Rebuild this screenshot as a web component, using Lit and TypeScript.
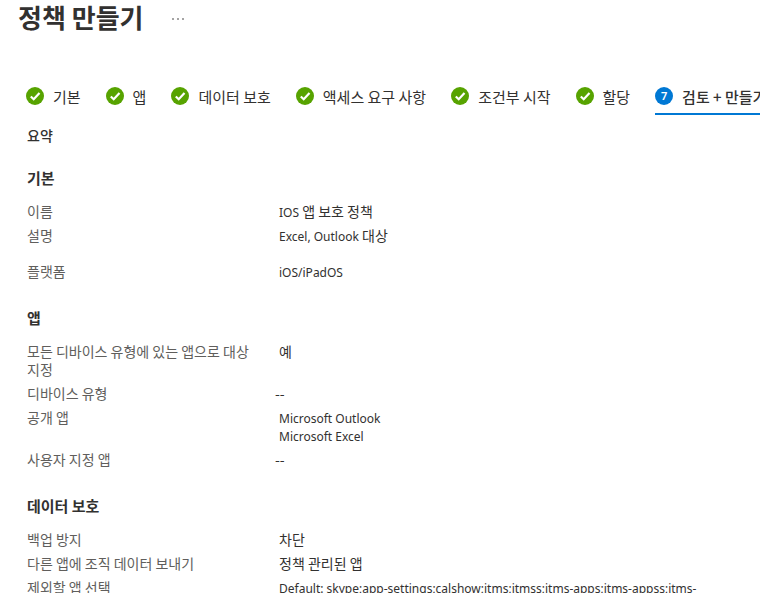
import { LitElement, html, svg, css } from "lit";
import { customElement, property } from "lit/decorators.js";
import { classMap } from "lit/directives/class-map.js";

interface Row {
  label: string;
  values: string[];
  tall?: boolean;
}

interface Section {
  title: string;
  rows: Row[];
}

const STEPS = ["기본", "앱", "데이터 보호", "액세스 요구 사항", "조건부 시작", "할당", "검토 + 만들기"];

const SECTIONS: Section[] = [
  {
    title: "기본",
    rows: [
      { label: "이름", values: ["IOS 앱 보호 정책"] },
      { label: "설명", values: ["Excel, Outlook 대상"], tall: true },
      { label: "플랫폼", values: ["iOS/iPadOS"] },
    ],
  },
  {
    title: "앱",
    rows: [
      { label: "모든 디바이스 유형에 있는 앱으로 대상 지정", values: ["예"] },
      { label: "디바이스 유형", values: [] },
      { label: "공개 앱", values: ["Microsoft Outlook", "Microsoft Excel"] },
      { label: "사용자 지정 앱", values: [] },
    ],
  },
  {
    title: "데이터 보호",
    rows: [
      { label: "백업 방지", values: ["차단"] },
      { label: "다른 앱에 조직 데이터 보내기", values: ["정책 관리된 앱"] },
      {
        label: "제외할 앱 선택",
        values: ["Default: skype;app-settings;calshow;itms;itmss;itms-apps;itms-appss;itms-"],
      },
    ],
  },
];

@customElement("wizard-steps")
export class WizardSteps extends LitElement {
  @property({ type: Array }) steps: string[] = [];
  @property({ type: Number }) current = 0;

  static styles = css`
    :host {
      display: block;
      overflow: hidden;
    }
    .steps {
      display: flex;
      gap: 25px;
      padding-left: 26px;
    }
    .step {
      display: flex;
      flex: none;
      align-items: center;
      gap: 9px;
      height: 36px;
      padding: 0;
      border: 0;
      border-bottom: 2px solid transparent;
      background: none;
      color: #323130;
      font: inherit;
      font-size: 15px;
      line-height: 20px;
      white-space: nowrap;
      cursor: pointer;
    }
    .step.current {
      border-bottom-color: #0078d4;
      font-weight: 500;
    }
    .name {
      padding-top: 2px;
    }
    .mark {
      display: block;
      width: 18px;
      height: 18px;
    }
    .number {
      display: grid;
      place-items: center;
      width: 18px;
      height: 18px;
      border-radius: 50%;
      background: #0078d4;
      color: #fff;
      font-family: "Noto Sans", sans-serif;
      font-size: 11px;
      font-weight: 600;
      line-height: 18px;
    }
  `;

  private mark(index: number) {
    if (index === this.current) return html`<span class="number">${index + 1}</span>`;
    return html`<svg class="mark" viewBox="0 0 18 18" aria-hidden="true">
      ${svg`<circle cx="9" cy="9" r="9" fill="#57a300"></circle>
        <path d="M4.8 9.5 7.7 12.3 13.5 6" fill="none" stroke="#fff" stroke-width="2.2"></path>`}
    </svg>`;
  }

  render() {
    return html`<div class="steps" role="tablist">
      ${this.steps.map(
        (step, i) => html`<button
          class=${classMap({ step: true, current: i === this.current })}
          role="tab"
          aria-selected=${i === this.current ? "true" : "false"}
        >
          ${this.mark(i)}<span class="name">${step}</span>
        </button>`
      )}
    </div>`;
  }
}

@customElement("summary-section")
export class SummarySection extends LitElement {
  @property({ attribute: false }) section!: Section;

  static styles = css`
    :host {
      display: block;
    }
    .heading {
      margin: 0 0 11px;
      color: #323130;
      font-size: 15px;
      font-weight: 700;
      line-height: 20px;
    }
    .list {
      margin: 0;
      font-size: 14px;
      line-height: 18px;
    }
    .row {
      display: grid;
      grid-template-columns: 248px minmax(0, 1fr);
      padding: 3px 0;
    }
    .row.tall {
      padding-bottom: 15px;
    }
    .label {
      padding-right: 20px;
      color: #605e5c;
      word-break: keep-all;
    }
    .value {
      margin: 0;
      color: #323130;
    }
    .text {
      padding-left: 4px;
    }
    .latin {
      font-family: "Noto Sans", sans-serif;
      font-size: 12px;
      line-height: 12px;
    }
  `;

  /** Latin runs are set in their own face, one size below the Hangul. */
  private runs(text: string) {
    return text
      .split(/([A-Za-z][ -~]*)/)
      .filter(Boolean)
      .map((run) => (/^[A-Za-z]/.test(run) ? html`<span class="latin">${run}</span>` : run));
  }

  render() {
    return html`<h3 class="heading">${this.section.title}</h3>
      <dl class="list">
        ${this.section.rows.map(
          (row) => html`<div class=${classMap({ row: true, tall: !!row.tall })}>
            <dt class="label">${row.label}</dt>
            <dd class="value">
              ${row.values.length
                ? row.values.map((v) => html`<div class="text">${this.runs(v)}</div>`)
                : "--"}
            </dd>
          </div>`
        )}
      </dl>`;
  }
}

@customElement("app-root")
export class AppRoot extends LitElement {
  static styles = css`
    :host {
      display: block;
      height: 100vh;
      overflow: hidden;
      background: #fff;
      color: #323130;
      font-family: "Noto Sans CJK KR", "Noto Sans", sans-serif;
    }
    .header {
      display: flex;
      align-items: flex-end;
      gap: 25px;
      height: 34px;
      padding-left: 18px;
    }
    .title {
      margin: 0;
      font-size: 26px;
      font-weight: 700;
      line-height: 34px;
    }
    .more {
      display: grid;
      place-items: center;
      width: 18px;
      height: 30px;
      padding: 0;
      border: 0;
      background: none;
      color: #323130;
      cursor: pointer;
    }
    .steps {
      margin-top: 45px;
    }
    .content {
      padding: 10px 40px 24px 27px;
    }
    .summary {
      margin: 0 0 23px;
      font-size: 14px;
      font-weight: 500;
      line-height: 20px;
    }
    .sections {
      display: grid;
      gap: 25px;
    }
  `;

  render() {
    return html`<header class="header">
        <h1 class="title">정책 만들기</h1>
        <button class="more" aria-label="추가 옵션">
          <svg width="12" height="2" viewBox="0 0 12 2" fill="currentColor" aria-hidden="true">
            <circle cx="1" cy="1" r="0.8"></circle>
            <circle cx="6" cy="1" r="0.8"></circle>
            <circle cx="11" cy="1" r="0.8"></circle>
          </svg>
        </button>
      </header>
      <wizard-steps class="steps" .steps=${STEPS} .current=${6}></wizard-steps>
      <main class="content">
        <h2 class="summary">요약</h2>
        <div class="sections">
          ${SECTIONS.map((s) => html`<summary-section .section=${s}></summary-section>`)}
        </div>
      </main>`;
  }
}
